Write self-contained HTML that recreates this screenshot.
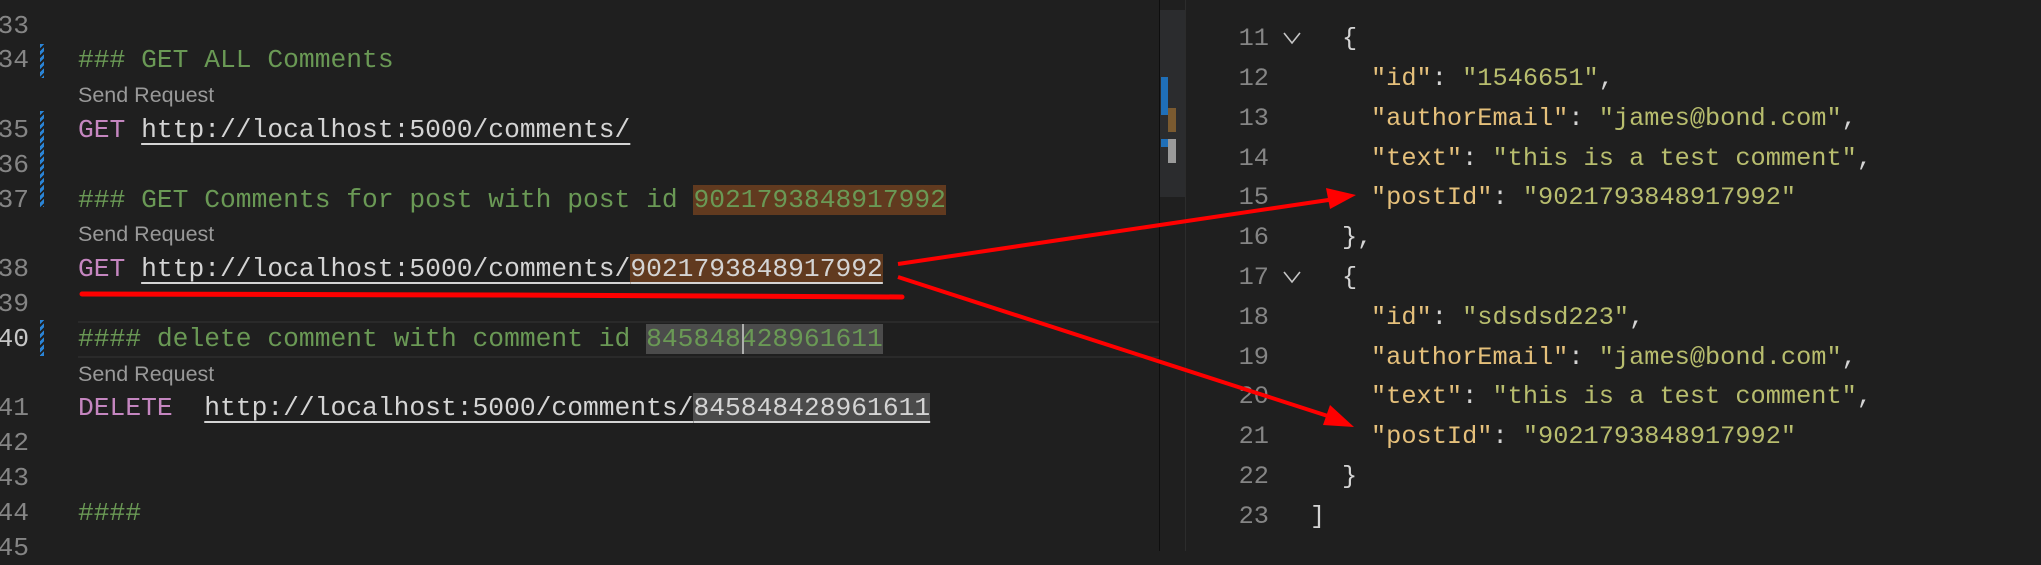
<!DOCTYPE html>
<html><head><meta charset="utf-8"><style>
body{margin:0;width:2041px;height:551px;background:#1f1f1f;overflow:hidden;position:relative;font-family:"Liberation Mono",monospace}
.r{position:absolute;height:34.8px;line-height:34.8px;white-space:pre;font-size:26.3px;color:#d4d4d4}
.ln{position:absolute;width:40px;text-align:right;left:-11px;color:#858585;font-size:26.3px;height:34.8px;line-height:34.8px}
.cl{font-family:"Liberation Sans",sans-serif;font-size:21.5px;color:#999}
.c{color:#6a9955}.k{color:#c586c0}.u{text-decoration:underline;text-decoration-color:#d4d4d4;text-underline-offset:6px;text-decoration-thickness:2px}
.hb{background:#613a1f}.hg{background:#4b4b4b}
.bar{position:absolute;left:40px;width:4px;background:repeating-linear-gradient(135deg,#2a84d6 0 3px,#1f1f1f 3px 5px)}
.R{position:absolute;height:39.8px;line-height:39.8px;white-space:pre;font-size:25.3px;color:#d4d4d4}
.rn{position:absolute;left:1227px;width:42px;text-align:right;color:#858585;font-size:25.3px;height:39.8px;line-height:39.8px}
.key{color:#e5c07b}.val{color:#b8bd6e}
</style></head><body>
<div style="position:absolute;left:78px;top:321px;width:1082px;height:33px;border-top:2px solid #2a2a2a;border-bottom:2px solid #2a2a2a"></div>
<div class="bar" style="top:44px;height:34px"></div>
<div class="bar" style="top:111px;height:96px"></div>
<div class="bar" style="top:320px;height:36px"></div>

<div class="ln" style="top:8.6px">33</div>
<div class="ln" style="top:43.4px">34</div>
<div class="ln" style="top:113px">35</div>
<div class="ln" style="top:147.8px">36</div>
<div class="ln" style="top:182.6px">37</div>
<div class="ln" style="top:252.2px">38</div>
<div class="ln" style="top:287px">39</div>
<div class="ln" style="top:321.8px;color:#c6c6c6">40</div>
<div class="ln" style="top:391.4px">41</div>
<div class="ln" style="top:426.2px">42</div>
<div class="ln" style="top:461px">43</div>
<div class="ln" style="top:495.8px">44</div>
<div class="ln" style="top:530.6px">45</div>

<div class="r c" style="left:78px;top:43.4px">### GET ALL Comments</div>
<div class="r cl" style="left:78px;top:78.2px">Send Request</div>
<div class="r" style="left:78px;top:113px"><span class="k">GET</span> <span class="u">http://localhost:5000/comments/</span></div>
<div class="r c" style="left:78px;top:182.6px">### GET Comments for post with post id <span class="hb">9021793848917992</span></div>
<div class="r cl" style="left:78px;top:217.4px">Send Request</div>
<div class="r" style="left:78px;top:252.2px"><span class="k">GET</span> <span class="u">http://localhost:5000/comments/<span class="hb">9021793848917992</span></span></div>
<div class="r c" style="left:78px;top:321.8px">#### delete comment with comment id <span class="hg">845848428961611</span></div>
<div style="position:absolute;left:742px;top:324px;width:2px;height:30px;background:#aeafad"></div>
<div class="r cl" style="left:78px;top:356.6px">Send Request</div>
<div class="r" style="left:78px;top:391.4px"><span class="k">DELETE</span>  <span class="u">http://localhost:5000/comments/<span class="hg">845848428961611</span></span></div>
<div class="r c" style="left:78px;top:495.8px">####</div>

<div style="position:absolute;left:1159px;top:0;width:1px;height:551px;background:#0e0e0e"></div>
<div style="position:absolute;left:1160px;top:10px;width:25px;height:187px;background:#2b2c2e"></div>
<div style="position:absolute;left:1161px;top:77px;width:7px;height:38px;background:#1f6fb8"></div>
<div style="position:absolute;left:1168px;top:108px;width:8px;height:24px;background:#7a5a30"></div>
<div style="position:absolute;left:1161px;top:139px;width:7px;height:8px;background:#1f6fb8"></div>
<div style="position:absolute;left:1168px;top:139px;width:8px;height:24px;background:#9a9a9a"></div>
<div style="position:absolute;left:1185px;top:0;width:1px;height:551px;background:#2c2c2c"></div>

<div class="R" style="left:1310px;top:-34px">[</div>
<div class="rn" style="top:19.1px">11</div>
<div class="R" style="left:1342px;top:19.1px">{</div>
<div class="rn" style="top:58.9px">12</div><div class="R" style="left:1371px;top:58.9px"><span class="key">"id"</span>: <span class="val">"1546651"</span>,</div>
<div class="rn" style="top:98.7px">13</div><div class="R" style="left:1371px;top:98.7px"><span class="key">"authorEmail"</span>: <span class="val">"james@bond.com"</span>,</div>
<div class="rn" style="top:138.5px">14</div><div class="R" style="left:1371px;top:138.5px"><span class="key">"text"</span>: <span class="val">"this is a test comment"</span>,</div>
<div class="rn" style="top:178.3px">15</div><div class="R" style="left:1371px;top:178.3px"><span class="key">"postId"</span>: <span class="val">"9021793848917992"</span></div>
<div class="rn" style="top:218.1px">16</div><div class="R" style="left:1342px;top:218.1px">},</div>
<div class="rn" style="top:257.9px">17</div>
<div class="R" style="left:1342px;top:257.9px">{</div>
<div class="rn" style="top:297.7px">18</div><div class="R" style="left:1371px;top:297.7px"><span class="key">"id"</span>: <span class="val">"sdsdsd223"</span>,</div>
<div class="rn" style="top:337.5px">19</div><div class="R" style="left:1371px;top:337.5px"><span class="key">"authorEmail"</span>: <span class="val">"james@bond.com"</span>,</div>
<div class="rn" style="top:377.3px">20</div><div class="R" style="left:1371px;top:377.3px"><span class="key">"text"</span>: <span class="val">"this is a test comment"</span>,</div>
<div class="rn" style="top:417.1px">21</div><div class="R" style="left:1371px;top:417.1px"><span class="key">"postId"</span>: <span class="val">"9021793848917992"</span></div>
<div class="rn" style="top:456.9px">22</div><div class="R" style="left:1342px;top:456.9px">}</div>
<div class="rn" style="top:496.7px">23</div><div class="R" style="left:1310px;top:496.7px">]</div>

<svg style="position:absolute;left:0;top:0" width="2041" height="551">
<polyline points="1284,33 1292,43 1300,33" stroke="#c5c5c5" stroke-width="1.6" fill="none"/>
<polyline points="1284,272 1292,282 1300,272" stroke="#c5c5c5" stroke-width="1.6" fill="none"/>
<path d="M82 294 L500 295 L902 297" stroke="#f00" stroke-width="5" fill="none" stroke-linecap="round"/>
<line x1="898" y1="264" x2="1335" y2="199" stroke="#f00" stroke-width="4"/>
<polygon points="1356,195 1326,188 1330,209" fill="#f00"/>
<line x1="898" y1="277" x2="1334" y2="418" stroke="#f00" stroke-width="4"/>
<polygon points="1354,427 1330,405 1323,425" fill="#f00"/>
</svg>
</body></html>
